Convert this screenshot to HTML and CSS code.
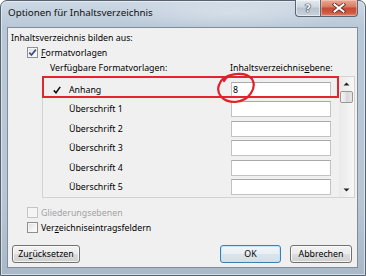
FILE: index.html
```html
<!DOCTYPE html>
<html lang="de">
<head>
<meta charset="utf-8">
<title>Optionen für Inhaltsverzeichnis</title>
<link rel="stylesheet" href="styles.css">
</head>
<body>
<div class="window">
  <div class="titlebar">
    <span class="title">Optionen für Inhaltsverzeichnis</span>
    <div class="caption-buttons">
      <div class="cap-btn help">?</div>
      <div class="cap-btn close">
        <svg width="14" height="10" viewBox="0 0 14 10"><path d="M2.5 1.5 L11.5 8.5 M11.5 1.5 L2.5 8.5" stroke="#5a2a22" stroke-width="3.6" stroke-linecap="square" fill="none"/><path d="M2.5 1.5 L11.5 8.5 M11.5 1.5 L2.5 8.5" stroke="#ffffff" stroke-width="2" stroke-linecap="square" fill="none"/></svg>
      </div>
    </div>
  </div>
  <div class="content">
    <div class="label-row">Inhaltsverzeichnis bilden aus:</div>
    <div class="check-row">
      <span class="cb checked"><svg width="9" height="9" viewBox="0 0 9 9"><path d="M1.3 4.6 L3.5 7 L7.8 1.6" stroke="#3b4f86" stroke-width="1.7" fill="none"/></svg></span>
      <span><u>F</u>ormatvorlagen</span>
    </div>
    <div class="list-head">
      <span class="head-left">Verfügbare Formatvorlagen:</span>
      <span>Inhaltsverzeichnis<u>e</u>bene:</span>
    </div>
    <div class="list">
      <div class="rows">
        <div class="row"><span class="mark"><svg width="8" height="8" viewBox="0 0 8 8"><path d="M0.8 4.4 L3 6.8 L7.2 0.9" stroke="#111" stroke-width="1.6" fill="none"/></svg></span><span class="name">Anhang</span><span class="field">8</span></div>
        <div class="row"><span class="mark"></span><span class="name">Überschrift 1</span><span class="field"></span></div>
        <div class="row"><span class="mark"></span><span class="name">Überschrift 2</span><span class="field"></span></div>
        <div class="row"><span class="mark"></span><span class="name">Überschrift 3</span><span class="field"></span></div>
        <div class="row"><span class="mark"></span><span class="name">Überschrift 4</span><span class="field"></span></div>
        <div class="row"><span class="mark"></span><span class="name">Überschrift 5</span><span class="field"></span></div>
      </div>
      <div class="scrollbar">
        <div class="sb-btn"><svg width="7" height="4" viewBox="0 0 7 4"><path d="M0.5 3.5 L3.5 0.5 L6.5 3.5 Z" fill="#222"/></svg></div>
        <div class="sb-thumb"></div>
        <div class="sb-track"></div>
        <div class="sb-btn"><svg width="7" height="4" viewBox="0 0 7 4"><path d="M0.5 0.5 L3.5 3.5 L6.5 0.5 Z" fill="#222"/></svg></div>
      </div>
      <div class="annot-rect"></div>
      <svg class="annot-circle" width="42" height="36" viewBox="0 0 42 36"><path d="M9 11 C 13 3, 30 1, 37 9 C 42 17, 35 31, 20 32 C 7 32, 1 23, 4 15 C 6 8, 12 5, 20 4" stroke="#e0202a" stroke-width="2.2" fill="none" stroke-linecap="round"/></svg>
    </div>
    <div class="check-row disabled gap-top">
      <span class="cb"></span>
      <span>Gliederungsebenen</span>
    </div>
    <div class="check-row">
      <span class="cb"></span>
      <span>Ver<u>z</u>eichniseintragsfeldern</span>
    </div>
    <div class="buttons">
      <button class="btn reset">Zu<u>r</u>ücksetzen</button>
      <button class="btn ok">OK</button>
      <button class="btn cancel">Abbrechen</button>
    </div>
  </div>
</div>
</body>
</html>
```

FILE: styles.css
```css
html, body {
  margin: 0;
  padding: 0;
  background: #ffffff;
}
body {
  width: 366px;
  height: 276px;
  overflow: hidden;
  font-family: "Noto Sans", "Open Sans", sans-serif;
  font-size: 8.8px;
  color: #000;
}
.window {
  width: 366px;
  height: 276px;
  box-sizing: border-box;
  border: 1px solid #56626f;
  border-radius: 7px 7px 0 0;
  padding: 0 7px 7px 6px;
  display: flex;
  flex-direction: column;
  background:
    radial-gradient(ellipse 120px 18px at 230px 12px, rgba(255,255,255,0.3), rgba(255,255,255,0)),
    linear-gradient(to bottom, #ccd8e4 0px, #b9c8d7 26px, #b8c6d4 200px, #a9b8c8 275px);
  box-shadow: inset 0 0 0 1px rgba(255,255,255,0.5);
}
.titlebar {
  height: 26px;
  margin-left: -6px;
  display: flex;
  justify-content: space-between;
  align-items: flex-start;
}
.title {
  padding-left: 7px;
  line-height: 24px;
  font-size: 9.8px;
  color: #111;
}
.caption-buttons {
  display: flex;
  margin-top: -1px;
}
.cap-btn {
  height: 17px;
  box-sizing: border-box;
  border: 1px solid #5b6573;
  border-top: none;
  display: flex;
  align-items: center;
  justify-content: center;
}
.help {
  width: 25px;
  border-right: none;
  border-radius: 0 0 0 4px;
  background: linear-gradient(to bottom, #e4eaf0 0%, #cdd6df 45%, #b6c2ce 50%, #c9d3dd 100%);
  box-shadow: inset 0 0 0 1px rgba(255,255,255,0.5);
  font-family: "DejaVu Sans", sans-serif;
  font-weight: bold;
  font-size: 11px;
  color: #eef2f6;
  text-shadow: 0 0 1px #2e3642, 0 0 1px #2e3642, 0 0 1px #2e3642;
}
.close {
  width: 38px;
  border-radius: 0 0 4px 0;
  background: linear-gradient(to bottom, #e9a895 0%, #d98068 40%, #c74a34 52%, #cf5a42 80%, #e0866c 100%);
  box-shadow: inset 0 0 0 1px rgba(255,220,200,0.45);
}
.content {
  flex: 1;
  box-sizing: border-box;
  border: 1px solid #7f8c9a;
  background: #f0f0f0;
  padding: 3px 5px 0 0;
  display: flex;
  flex-direction: column;
}
.label-row {
  height: 14px;
  line-height: 14px;
  padding-left: 3px;
}
.check-row {
  height: 15px;
  display: flex;
  align-items: center;
  padding-left: 19px;
}
.check-row.gap-top {
  margin-top: 7px;
}
.check-row.disabled {
  color: #a3a3a3;
}
.cb {
  width: 11px;
  height: 11px;
  box-sizing: border-box;
  border: 1px solid #8e8f8f;
  background: linear-gradient(135deg, #dcdcdc 0%, #f4f4f4 60%, #ffffff 100%);
  box-shadow: inset 0 0 0 1px #f6f6f6;
  margin-right: 3px;
  display: flex;
  align-items: center;
  justify-content: center;
}
.disabled .cb {
  border-color: #c4c4c4;
  background: #f4f4f4;
}
.list-head {
  height: 16px;
  line-height: 16px;
  display: flex;
}
.head-left {
  padding-left: 42px;
  width: 180px;
}
.list {
  position: relative;
  height: 122px;
  margin-left: 34px;
  width: 313px;
  box-sizing: border-box;
  border: 1px solid #d3d3d3;
  display: flex;
}
.rows {
  flex: 1;
  padding-top: 3px;
}
.row {
  height: 19.5px;
  display: flex;
  align-items: center;
  padding-left: 10px;
}
.mark {
  width: 16px;
  display: flex;
  align-items: center;
}
.name {
  width: 162px;
}
.field {
  width: 100px;
  height: 16px;
  box-sizing: border-box;
  border: 1px solid #c2c2c2;
  border-top-color: #a9a9a9;
  background: #ffffff;
  line-height: 14px;
  padding-left: 1px;
}
.scrollbar {
  width: 15px;
  display: flex;
  flex-direction: column;
  background: linear-gradient(to right, #e9e9e9, #f7f7f7);
}
.sb-btn {
  height: 14px;
  display: flex;
  align-items: center;
  justify-content: center;
}
.sb-thumb {
  height: 12px;
  margin: 0 1px;
  box-sizing: border-box;
  border: 1px solid #979797;
  border-radius: 2px;
  background: linear-gradient(to right, #f4f4f4, #e2e2e2 50%, #d6d6d6 50%, #e6e6e6);
}
.sb-track {
  flex: 1;
}
.annot-rect {
  position: absolute;
  left: -1px;
  top: -1px;
  width: 297px;
  height: 22px;
  box-sizing: border-box;
  border: 2px solid #e3262c;
}
.annot-circle {
  position: absolute;
  left: 172px;
  top: -7px;
}
.buttons {
  margin-top: 10px;
  display: flex;
  padding-left: 4px;
}
.btn {
  height: 18px;
  box-sizing: border-box;
  border: 1px solid #707070;
  border-radius: 3px;
  background: linear-gradient(to bottom, #f2f2f2 0%, #ebebeb 50%, #dddddd 51%, #cfcfcf 100%);
  box-shadow: inset 0 0 0 1px rgba(255,255,255,0.75);
  font-family: "Noto Sans", "Open Sans", sans-serif;
  font-size: 8.8px;
  color: #000;
  padding: 0;
  line-height: 15px;
}
.reset {
  width: 68px;
}
.ok {
  width: 61px;
  margin-left: auto;
  border-color: #3c7fb1;
  background: linear-gradient(to bottom, #f0f5f9 0%, #e8eef3 50%, #dae4ec 51%, #d3dfe9 100%);
  box-shadow: inset 0 0 0 1px rgba(190,230,253,0.9);
}
.cancel {
  width: 62px;
  margin-left: 9px;
}
```
